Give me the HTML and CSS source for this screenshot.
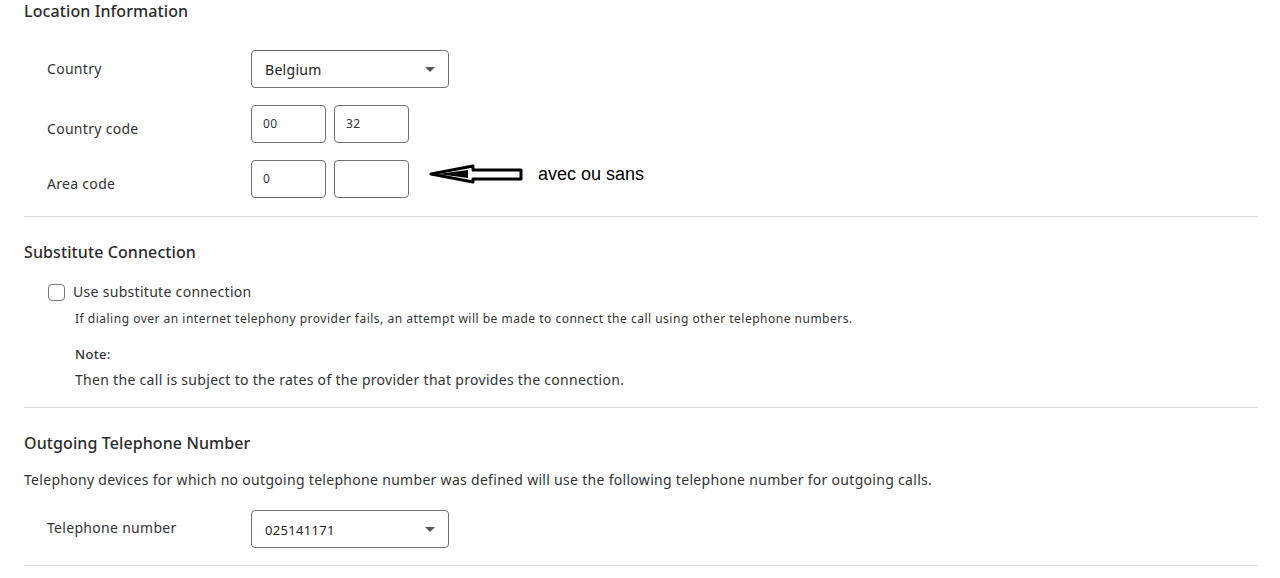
FILE: index.html
```html
<!DOCTYPE html>
<html>
  <head>
    <meta charset="UTF-8" />
    <title>Location Information</title>
    <link rel="stylesheet" href="styles.css">
  </head>
  <body>
    <div class="page">
      <section class="section first">
        <h2 class="section-title">Location Information</h2>
        <div class="form-rows">
          <div class="form-row">
            <span class="row-label">Country</span>
            <div class="select-box">
              <span>Belgium</span>
              <span class="caret"></span>
            </div>
          </div>
          <div class="form-row">
            <span class="row-label low">Country code</span>
            <div class="code-pair">
              <div class="code-box">00</div>
              <div class="code-box">32</div>
            </div>
          </div>
          <div class="form-row">
            <span class="row-label low">Area code</span>
            <div class="code-pair">
              <div class="code-box">0</div>
              <div class="code-box"></div>
            </div>
            <div class="remark">
              <svg class="arrow" width="96" height="24" viewBox="0 0 96 24">
                <polygon points="3,12 45,4 45,8 93,8 93,17 45,17 45,20"
                  fill="#fff" stroke="#000" stroke-width="3" stroke-linejoin="round" />
                <polygon points="10,12 40,8 40,16" fill="#000" />
              </svg>
              <span class="remark-text">avec ou sans</span>
            </div>
          </div>
        </div>
      </section>

      <section class="section">
        <h2 class="section-title">Substitute Connection</h2>
        <div class="check-block">
          <label class="check-row">
            <span class="checkbox"></span>
            <span>Use substitute connection</span>
          </label>
          <p class="hint">If dialing over an internet telephony provider fails, an attempt will be made to connect the call using other telephone numbers.</p>
          <p class="note-title">Note:</p>
          <p class="note-text">Then the call is subject to the rates of the provider that provides the connection.</p>
        </div>
      </section>

      <section class="section">
        <h2 class="section-title">Outgoing Telephone Number</h2>
        <p class="section-text">Telephony devices for which no outgoing telephone number was defined will use the following telephone number for outgoing calls.</p>
        <div class="form-row single">
          <span class="row-label high">Telephone number</span>
          <div class="select-box">
            <span class="select-value">025141171</span>
            <span class="caret"></span>
          </div>
        </div>
      </section>
    </div>
  </body>
</html>
```

FILE: styles.css
```css
body {
  font-family: "Noto Sans", Arial, sans-serif;
  background-color: #ffffff;
  color: #333;
  letter-spacing: 0.3px;
  margin: 0;
  padding: 0;
}

.page {
  padding: 0 22px 0 24px;
}

.section {
  border-bottom: 1px solid #dcdcdc;
  padding-top: 24px;
  padding-bottom: 17px;
}

.section.first {
  padding-top: 0;
  padding-bottom: 18px;
}

.section-title {
  font-size: 16px;
  font-weight: 500;
  line-height: 22px;
  letter-spacing: 0.1px;
  color: #2b2b2b;
  margin: 0;
}

.form-rows {
  display: flex;
  flex-direction: column;
  gap: 17px;
  margin-top: 28px;
}

.form-row {
  display: flex;
  align-items: center;
  height: 38px;
}

.form-row.single {
  margin-top: 20px;
}

.row-label {
  width: 204px;
  padding-left: 23px;
  font-size: 14px;
  line-height: 20px;
}

.row-label.low {
  padding-top: 10px;
}

.row-label.high {
  padding-bottom: 2px;
}

.select-box {
  width: 198px;
  height: 38px;
  box-sizing: border-box;
  border: 1px solid #6f6f6f;
  border-radius: 4px;
  display: flex;
  align-items: center;
  justify-content: space-between;
  padding: 0 13px 0 13px;
  font-size: 14px;
  color: #222;
}

.select-value {
  font-size: 13px;
  padding-top: 2px;
}

.caret {
  width: 0;
  height: 0;
  border-left: 5px solid transparent;
  border-right: 5px solid transparent;
  border-top: 5px solid #555;
}

.code-pair {
  display: flex;
  gap: 8px;
}

.code-box {
  width: 75px;
  height: 38px;
  box-sizing: border-box;
  border: 1px solid #6f6f6f;
  border-radius: 4px;
  padding-left: 11px;
  font-size: 12px;
  line-height: 36px;
  color: #333;
}

.remark {
  display: flex;
  align-items: center;
  margin-left: 19px;
  margin-top: -10px;
}

.arrow {
  display: block;
}

.remark-text {
  font-family: "Liberation Sans", Arial, sans-serif;
  font-size: 18px;
  letter-spacing: 0;
  color: #000;
  margin-left: 14px;
}

.check-block {
  padding-left: 24px;
  margin-top: 19px;
}

.check-row {
  display: flex;
  align-items: center;
  gap: 8px;
  font-size: 14px;
  line-height: 20px;
}

.checkbox {
  width: 17px;
  height: 17px;
  box-sizing: border-box;
  border: 1px solid #777;
  border-radius: 4px;
}

.hint {
  font-size: 12px;
  line-height: 18px;
  letter-spacing: 0.5px;
  margin: 8px 0 0 27px;
}

.note-title {
  font-size: 13px;
  font-weight: 500;
  line-height: 20px;
  margin: 16px 0 0 27px;
}

.note-text {
  font-size: 14px;
  line-height: 20px;
  margin: 6px 0 0 27px;
}

.section-text {
  font-size: 14px;
  line-height: 20px;
  margin: 16px 0 0 0;
}
```
